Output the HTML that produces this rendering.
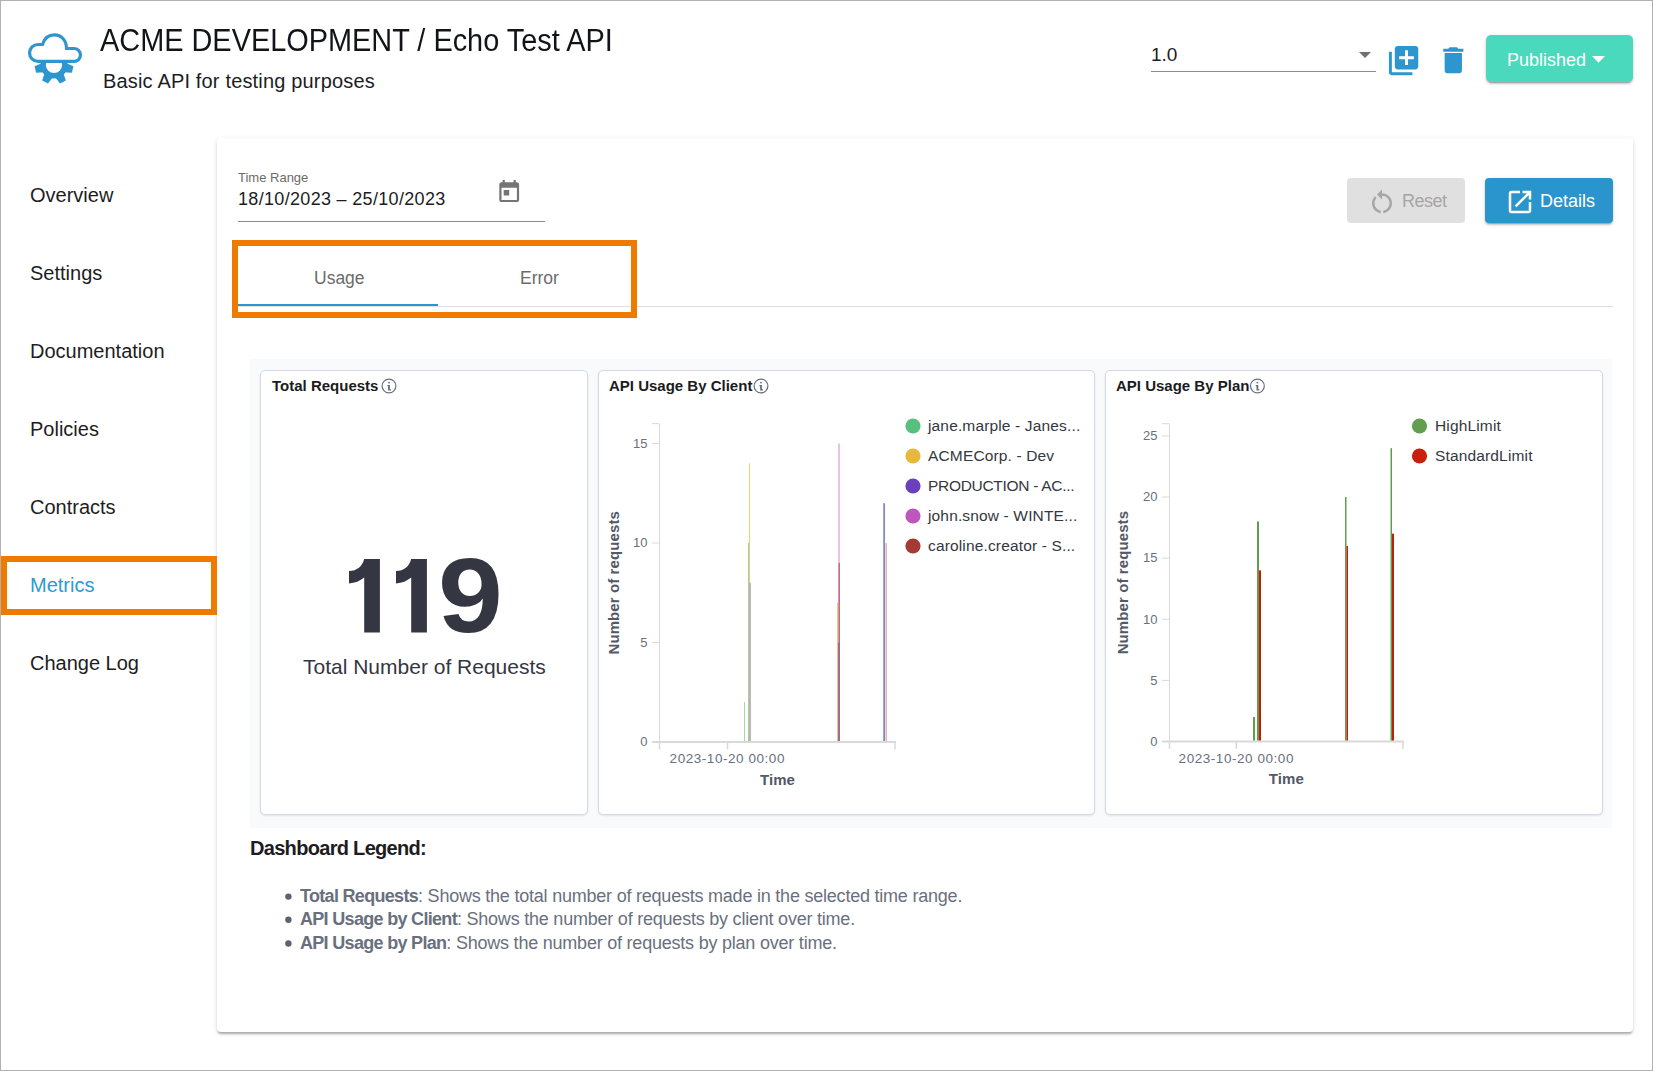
<!DOCTYPE html>
<html><head><meta charset="utf-8">
<style>
*{box-sizing:border-box;margin:0;padding:0}
html,body{width:1653px;height:1071px;overflow:hidden;background:#fff}
body{position:relative;font-family:"Liberation Sans",sans-serif;color:#1d1d1f}
.a{position:absolute;white-space:nowrap;line-height:1}
#frame{position:absolute;left:0;top:0;width:1653px;height:1071px;border:1px solid #b3afb3;pointer-events:none;z-index:50}
.nav{position:absolute;left:30px;font-size:20px;line-height:1;color:#1d1d1f}
.card{position:absolute;left:217px;top:138px;width:1416px;height:894px;background:#fff;border-radius:4px;
 box-shadow:0 3px 2px -1px rgba(0,0,0,.22),0 2px 3px 0 rgba(0,0,0,.1),0 1px 6px 0 rgba(0,0,0,.08)}
.orange{position:absolute;border:6px solid #ee7b00;z-index:40}
.btn{position:absolute;border-radius:4px}
.dash{position:absolute;left:250px;top:359px;width:1362px;height:469px;background:#f9fafc}
.panel{position:absolute;top:370px;height:445px;background:#fff;border:1px solid #d3dae6;border-radius:5px;
 box-shadow:0 1px 2px rgba(152,162,179,.25)}
.ptitle{position:absolute;left:10px;top:6.5px;font-size:15px;font-weight:bold;color:#1a1c21;line-height:1;white-space:nowrap}
.tick{font-size:13px;color:#69707d;position:absolute;line-height:1;white-space:nowrap}
.leg{position:absolute;font-size:15px;color:#343741;line-height:1;white-space:nowrap}
.dot{position:absolute;width:15px;height:15px;border-radius:50%}
</style></head>
<body>
<div id="frame"></div>

<!-- logo -->
<svg class="a" style="left:20px;top:25px" width="70" height="65" viewBox="20 25 70 65">
 <path d="M38 61.4 H74 A6.45 6.45 0 0 0 74 48.5 H66.5 C66.5 40 61 34.8 54.5 34.8 C48 34.8 44 39 42.5 44.5 H38 A8.45 8.45 0 0 0 38 61.4 Z" fill="none" stroke="#2e96cf" stroke-width="3.2"/>
 <defs><mask id="gm"><rect x="20" y="63" width="70" height="30" fill="#fff"/><circle cx="54" cy="65" r="8.1" fill="#000"/></mask></defs>
 <g mask="url(#gm)" fill="#2e96cf">
  <circle cx="54" cy="65" r="13.6"/>
  <polygon points="49.3,76 58.7,76 57.3,84.2 50.7,84.2" transform="rotate(-27.7 54 65)"/>
  <polygon points="49.3,76 58.7,76 57.3,84.2 50.7,84.2" transform="rotate(27.7 54 65)"/>
  <polygon points="49.3,76 58.7,76 57.3,84.2 50.7,84.2" transform="rotate(-76.4 54 65)"/>
  <polygon points="49.3,76 58.7,76 57.3,84.2 50.7,84.2" transform="rotate(76.4 54 65)"/>
 </g>
</svg>

<div class="a" style="left:100px;top:25px;font-size:31px;color:#111418;transform:scaleX(0.932);transform-origin:0 0">ACME DEVELOPMENT / Echo Test API</div>
<div class="a" style="left:103px;top:71px;font-size:20px;color:#1d1d1f;letter-spacing:0.17px">Basic API for testing purposes</div>

<!-- version select -->
<div class="a" style="left:1151px;top:45px;font-size:19px;color:#1d1d1f">1.0</div>
<div class="a" style="left:1151px;top:71px;width:225px;height:1px;background:#8c8c8c"></div>
<svg class="a" style="left:0;top:0" width="1653" height="100"><polygon points="1359,52 1371,52 1365,58" fill="#707070"/></svg>
<svg class="a" style="left:1386px;top:43px" width="35.2" height="35.2" viewBox="0 0 24 24"><path fill="#2e96cf" d="M4 6H2v14c0 1.1.9 2 2 2h14v-2H4V6zm16-4H8c-1.1 0-2 .9-2 2v12c0 1.1.9 2 2 2h12c1.1 0 2-.9 2-2V4c0-1.1-.9-2-2-2zm-1 9h-4v4h-2v-4H9V9h4V5h2v4h4v2z"/></svg>
<svg class="a" style="left:1436.4px;top:42.9px" width="34.6" height="34.6" viewBox="0 0 24 24"><path fill="#2e96cf" d="M6 19c0 1.1.9 2 2 2h8c1.1 0 2-.9 2-2V7H6v12zM19 4h-3.5l-1-1h-5l-1 1H5v2h14V4z"/></svg>
<div class="btn" style="left:1486px;top:35px;width:147px;height:47px;background:#4ad9bc;border-radius:5px;box-shadow:0 3px 1px -2px rgba(0,0,0,.2),0 2px 2px 0 rgba(0,0,0,.14),0 1px 5px 0 rgba(0,0,0,.12)">
 <div class="a" style="left:21px;top:16px;font-size:18px;color:#fff">Published</div>
 <svg class="a" style="left:105.8px;top:21px" width="13.1" height="6.8" viewBox="0 0 13.1 6.8"><polygon points="0,0 13.1,0 6.55,6.8" fill="#fff"/></svg>
</div>

<!-- sidebar -->
<div class="nav" style="top:185px">Overview</div>
<div class="nav" style="top:263px">Settings</div>
<div class="nav" style="top:341px">Documentation</div>
<div class="nav" style="top:419px">Policies</div>
<div class="nav" style="top:497px">Contracts</div>
<div class="nav" style="top:575px;color:#2d9ad3">Metrics</div>
<div class="nav" style="top:653px">Change Log</div>
<div class="orange" style="left:1px;top:556px;width:216px;height:59px"></div>

<!-- main card -->
<div class="card"></div>

<div class="a" style="left:238px;top:171px;font-size:13px;color:#6b6b6b">Time Range</div>
<div class="a" style="left:238px;top:190px;font-size:18px;color:#1d1d1f;letter-spacing:0.32px">18/10/2023 – 25/10/2023</div>
<div class="a" style="left:238px;top:221px;width:307px;height:1px;background:#8c8c8c"></div>
<svg class="a" style="left:495.9px;top:178.9px" width="26.4" height="26.4" viewBox="0 0 24 24"><path fill="#757575" d="M19 3h-1V1h-2v2H8V1H6v2H5c-1.11 0-1.99.9-1.99 2L3 19c0 1.1.89 2 2 2h14c1.1 0 2-.9 2-2V5c0-1.1-.9-2-2-2zm0 16H5V8h14v11zM7 10h5v5H7z"/></svg>

<div class="btn" style="left:1347px;top:178px;width:118px;height:45px;background:#e0e0e0">
 <svg class="a" style="left:19.7px;top:9px" width="30" height="30" viewBox="0 0 24 24"><path fill="#a6a6a6" d="M12 5V2L8 6l4 4V7c3.31 0 6 2.69 6 6 0 2.97-2.17 5.43-5 5.91v2.02c3.950-.49 7-3.85 7-7.93 0-4.42-3.58-8-8-8zm-6 8c0-1.65.67-3.15 1.76-4.24L6.34 7.34C4.9 8.790 4 10.790 4 13c0 4.080 3.050 7.440 7 7.930v-2.020c-2.830-.48-5-2.940-5-5.910z"/></svg>
 <div class="a" style="left:55px;top:14px;font-size:18px;color:#a6a6a6;letter-spacing:-0.5px">Reset</div>
</div>
<div class="btn" style="left:1485px;top:178px;width:128px;height:45px;background:#2a95cc;box-shadow:0 3px 1px -2px rgba(0,0,0,.2),0 2px 2px 0 rgba(0,0,0,.14),0 1px 5px 0 rgba(0,0,0,.12)">
 <svg class="a" style="left:20px;top:9px" width="30" height="30" viewBox="0 0 24 24"><path fill="#fff" d="M19 19H5V5h7V3H5c-1.11 0-2 .9-2 2v14c0 1.1.89 2 2 2h14c1.1 0 2-.9 2-2v-7h-2v7zM14 3v2h3.59l-9.83 9.83 1.41 1.41L19 6.41V10h2V3h-7z"/></svg>
 <div class="a" style="left:55px;top:14px;font-size:18px;color:#fff">Details</div>
</div>

<!-- tabs -->
<div class="a" style="left:314px;top:269.5px;font-size:17.5px;color:#6b6b6b">Usage</div>
<div class="a" style="left:520px;top:269.5px;font-size:17.5px;color:#6b6b6b">Error</div>
<div class="a" style="left:238px;top:306px;width:1375px;height:1px;background:#e0e0e0"></div>
<div class="a" style="left:238px;top:304px;width:200px;height:2px;background:#2c96cd"></div>
<div class="orange" style="left:232px;top:240px;width:405px;height:78px"></div>

<!-- dashboard -->
<div class="dash"></div>
<div class="panel" style="left:260px;width:328px">
 <div class="ptitle" style="left:11px">Total Requests</div>
</div>
<div class="panel" style="left:598px;width:497px">
 <div class="ptitle">API Usage By Client</div>
</div>
<div class="panel" style="left:1105px;width:498px">
 <div class="ptitle">API Usage By Plan</div>
</div>

<svg class="a" style="left:0;top:0;z-index:5" width="1653" height="1071" viewBox="0 0 1653 1071">
<style>.tk{font-family:"Liberation Sans",sans-serif;font-size:13px;fill:#69707d}.axt{font-family:"Liberation Sans",sans-serif;font-size:15px;font-weight:bold;fill:#535966;letter-spacing:0.1px}.lg{font-family:"Liberation Sans",sans-serif;font-size:15.5px;letter-spacing:0.15px;fill:#343741}</style>
<g fill="none" stroke="#69707d" stroke-width="1.2"><circle cx="389" cy="386" r="6.9"/></g>
<g fill="#69707d"><circle cx="389" cy="382.6" r="0.95"/><path d="M387.4 385.1 H389.9 V389.2 H391 V390.4 H388.1 V386.3 H387.4 Z"/></g>

<g fill="none" stroke="#69707d" stroke-width="1.2"><circle cx="761" cy="386" r="6.9"/></g>
<g fill="#69707d"><circle cx="761" cy="382.6" r="0.95"/><path d="M759.4 385.1 H761.9 V389.2 H763 V390.4 H760.1 V386.3 H759.4 Z"/></g>

<g fill="none" stroke="#69707d" stroke-width="1.2"><circle cx="1257.4" cy="386" r="6.9"/></g>
<g fill="#69707d"><circle cx="1257.4" cy="382.6" r="0.95"/><path d="M1255.8000000000002 385.1 H1258.3000000000002 V389.2 H1259.4 V390.4 H1256.5 V386.3 H1255.8000000000002 Z"/></g>

<rect x="659.0" y="423.6" width="1" height="319.4" fill="#d9d9d9"/>
<rect x="652.0" y="423.1" width="7" height="1" fill="#d9d9d9"/>
<rect x="652.0" y="741.5" width="7" height="1" fill="#d9d9d9"/>
<text x="647.5" y="746.3" text-anchor="end" class="tk">0</text>
<rect x="652.0" y="642.0" width="7" height="1" fill="#d9d9d9"/>
<text x="647.5" y="646.8" text-anchor="end" class="tk">5</text>
<rect x="652.0" y="542.5" width="7" height="1" fill="#d9d9d9"/>
<text x="647.5" y="547.3" text-anchor="end" class="tk">10</text>
<rect x="652.0" y="443.0" width="7" height="1" fill="#d9d9d9"/>
<text x="647.5" y="447.8" text-anchor="end" class="tk">15</text>
<rect x="652.0" y="741" width="244.0" height="2" fill="#d9d9d9"/>
<rect x="658.75" y="742" width="1.5" height="7.5" fill="#d9d9d9"/>
<rect x="726.75" y="742" width="1.5" height="7.5" fill="#d9d9d9"/>
<rect x="894.25" y="742" width="1.5" height="7.5" fill="#d9d9d9"/>
<text x="727.3" y="763" text-anchor="middle" class="tk" style="font-size:13.5px;letter-spacing:0.55px">2023-10-20 00:00</text>
<text x="777.5" y="784.5" text-anchor="middle" class="axt">Time</text>
<text x="0" y="0" text-anchor="middle" class="axt" transform="translate(619 582.8) rotate(-90)">Number of requests</text>
<rect x="744" y="702.2" width="1" height="38.799999999999955" fill="#57c07c" opacity="0.6"/>
<rect x="748" y="543.0" width="1" height="198.0" fill="#57c07c" opacity="0.65"/>
<rect x="749" y="463.40000000000003" width="1" height="277.59999999999997" fill="#e8b83c" opacity="0.7"/>
<rect x="749.6" y="582.8" width="1.2" height="158.20000000000005" fill="#6a40bd" opacity="0.5"/>
<rect x="837" y="602.7" width="1.2" height="138.29999999999995" fill="#e8b83c" opacity="0.7"/>
<rect x="838.3" y="443.5" width="1.4" height="297.5" fill="#bd56bd" opacity="0.5"/>
<rect x="838.5" y="562.9" width="1.5" height="178.10000000000002" fill="#a33a36" opacity="0.6"/>
<rect x="838.1" y="642.5" width="1.2" height="98.5" fill="#6a40bd" opacity="0.6"/>
<rect x="883" y="503.20000000000005" width="1" height="237.79999999999995" fill="#57c07c" opacity="0.6"/>
<rect x="883.7" y="503.20000000000005" width="1.3" height="237.79999999999995" fill="#6a40bd" opacity="0.7"/>
<rect x="885.4" y="543.0" width="1.6" height="198.0" fill="#a33a36" opacity="0.35"/>
<rect x="1169.0" y="423.676" width="1" height="318.824" fill="#d9d9d9"/>
<rect x="1162.0" y="423.176" width="7" height="1" fill="#d9d9d9"/>
<rect x="1162.0" y="741.0" width="7" height="1" fill="#d9d9d9"/>
<text x="1157.5" y="745.8" text-anchor="end" class="tk">0</text>
<rect x="1162.0" y="679.88" width="7" height="1" fill="#d9d9d9"/>
<text x="1157.5" y="684.68" text-anchor="end" class="tk">5</text>
<rect x="1162.0" y="618.76" width="7" height="1" fill="#d9d9d9"/>
<text x="1157.5" y="623.56" text-anchor="end" class="tk">10</text>
<rect x="1162.0" y="557.64" width="7" height="1" fill="#d9d9d9"/>
<text x="1157.5" y="562.44" text-anchor="end" class="tk">15</text>
<rect x="1162.0" y="496.52" width="7" height="1" fill="#d9d9d9"/>
<text x="1157.5" y="501.32" text-anchor="end" class="tk">20</text>
<rect x="1162.0" y="435.4" width="7" height="1" fill="#d9d9d9"/>
<text x="1157.5" y="440.2" text-anchor="end" class="tk">25</text>
<rect x="1162.0" y="740.5" width="242.0" height="2" fill="#d9d9d9"/>
<rect x="1168.75" y="741.5" width="1.5" height="7.5" fill="#d9d9d9"/>
<rect x="1235.55" y="741.5" width="1.5" height="7.5" fill="#d9d9d9"/>
<rect x="1402.25" y="741.5" width="1.5" height="7.5" fill="#d9d9d9"/>
<text x="1236.3" y="762.5" text-anchor="middle" class="tk" style="font-size:13.5px;letter-spacing:0.55px">2023-10-20 00:00</text>
<text x="1286.3" y="784.0" text-anchor="middle" class="axt">Time</text>
<text x="0" y="0" text-anchor="middle" class="axt" transform="translate(1128 582.588) rotate(-90)">Number of requests</text>
<rect x="1253" y="717.052" width="2" height="23.44799999999998" fill="#5f9e4e" opacity="1"/>
<rect x="1257" y="521.468" width="2" height="219.03200000000004" fill="#5f9e4e" opacity="1"/>
<rect x="1259" y="570.364" width="2" height="170.13599999999997" fill="#c41c0a" opacity="1"/>
<rect x="1345" y="497.02" width="1.5" height="243.48000000000002" fill="#5f9e4e" opacity="1"/>
<rect x="1346.5" y="545.9159999999999" width="1.5" height="194.58400000000006" fill="#c41c0a" opacity="1"/>
<rect x="1390.5" y="448.124" width="1.5" height="292.376" fill="#5f9e4e" opacity="1"/>
<rect x="1392" y="533.692" width="2" height="206.808" fill="#c41c0a" opacity="1"/>
<circle cx="913" cy="426" r="7.6" fill="#57c07c"/>
<text x="928" y="430.7" class="lg">jane.marple - Janes...</text>
<circle cx="913" cy="456" r="7.6" fill="#e8b83c"/>
<text x="928" y="460.7" class="lg">ACMECorp. - Dev</text>
<circle cx="913" cy="486" r="7.6" fill="#6a40bd"/>
<text x="928" y="490.7" class="lg" style="letter-spacing:-0.3px">PRODUCTION - AC...</text>
<circle cx="913" cy="516" r="7.6" fill="#bd56bd"/>
<text x="928" y="520.7" class="lg">john.snow - WINTE...</text>
<circle cx="913" cy="546" r="7.6" fill="#a33a36"/>
<text x="928" y="550.7" class="lg">caroline.creator - S...</text>
<circle cx="1419.5" cy="426" r="7.6" fill="#5f9f4f"/>
<text x="1435" y="430.7" class="lg">HighLimit</text>
<circle cx="1419.5" cy="456" r="7.6" fill="#c8200c"/>
<text x="1435" y="460.7" class="lg">StandardLimit</text>
</svg>
<svg class="a" style="left:0;top:0" width="1653" height="1071"><g fill="#343741"><path id="one" d="M364.2 559 H379.9 V632.5 H364.2 V577.6 C360 581 355 583.4 349 583.4 V571.1 C357 571.1 362.5 566 364.2 559 Z"/><path d="M364.2 559 H379.9 V632.5 H364.2 V577.6 C360 581 355 583.4 349 583.4 V571.1 C357 571.1 362.5 566 364.2 559 Z" transform="translate(47 0)"/></g></svg>
<div id="nine" class="a" style="left:438.3px;top:542.5px;font-size:105px;font-weight:bold;color:#343741;transform:scaleX(1.11);transform-origin:0 0">9</div>
<div class="a" style="left:303px;top:656px;font-size:21px;color:#343741">Total Number of Requests</div>

<!-- legend text -->
<div class="a" style="left:250px;top:838px;font-size:20px;font-weight:bold;color:#1d1d1f;letter-spacing:-0.69px">Dashboard Legend:</div>
<svg class="a" style="left:0;top:0" width="1653" height="1071"><g fill="#5c6370"><circle cx="288.4" cy="896.6" r="3.2"/><circle cx="288.4" cy="919.8" r="3.2"/><circle cx="288.4" cy="943.5" r="3.2"/></g></svg>
<div class="a" style="left:300px;top:887px;font-size:18px;color:#69707d;letter-spacing:-0.22px"><b style="letter-spacing:-0.69px">Total Requests</b>: Shows the total number of requests made in the selected time range.</div>
<div class="a" style="left:300px;top:910px;font-size:18px;color:#69707d;letter-spacing:-0.22px"><b style="letter-spacing:-0.69px">API Usage by Client</b>: Shows the number of requests by client over time.</div>
<div class="a" style="left:300px;top:934px;font-size:18px;color:#69707d;letter-spacing:-0.22px"><b style="letter-spacing:-0.69px">API Usage by Plan</b>: Shows the number of requests by plan over time.</div>
</body></html>
